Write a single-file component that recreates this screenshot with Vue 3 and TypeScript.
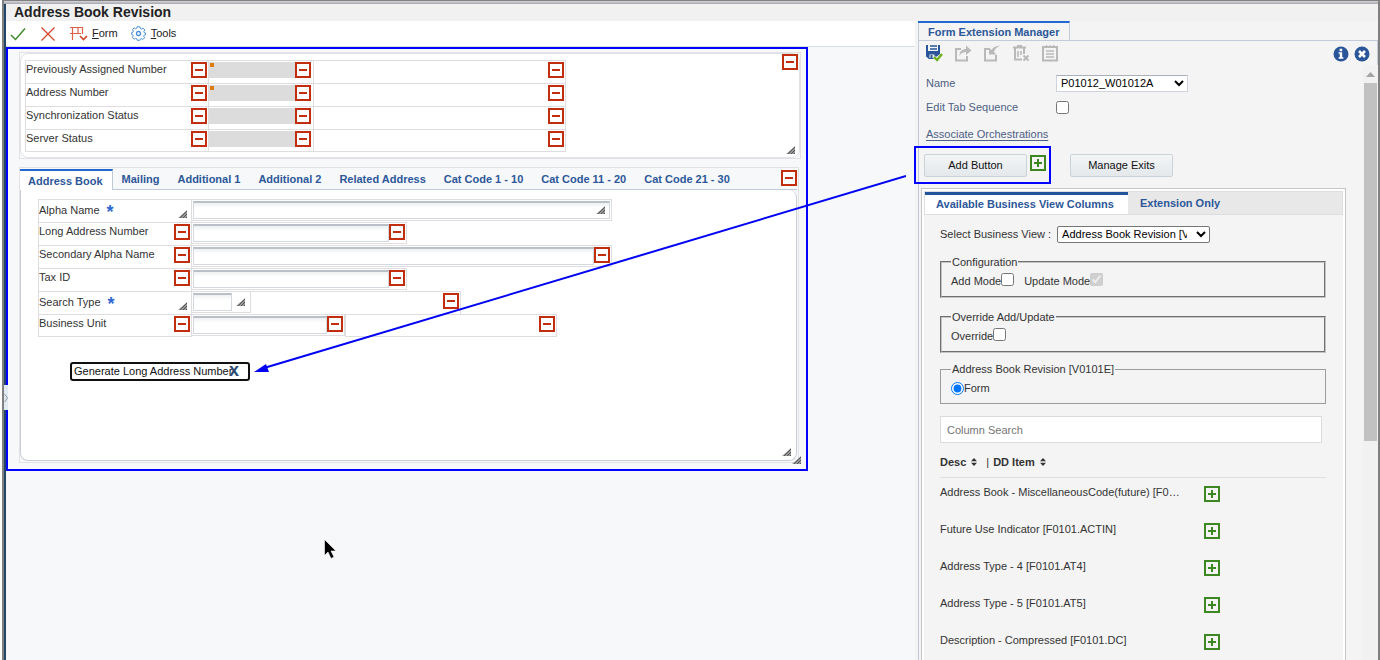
<script setup lang="ts">
import { ref } from 'vue'

interface HeaderField { id: string; label: string; flagged: boolean }
interface DetailField {
  id: string
  label: string
  required?: boolean
  size: 'wide' | 'medium' | 'code' | 'unit'
  removable: boolean
  description?: 'short' | 'long'
}

const headerFields: HeaderField[] = [
  { id: 'previous', label: 'Previously Assigned Number', flagged: true },
  { id: 'number', label: 'Address Number', flagged: true },
  { id: 'sync', label: 'Synchronization Status', flagged: false },
  { id: 'server', label: 'Server Status', flagged: false },
]

const tabs = [
  'Address Book', 'Mailing', 'Additional 1', 'Additional 2',
  'Related Address', 'Cat Code 1 - 10', 'Cat Code 11 - 20', 'Cat Code 21 - 30',
]
const activeTab = ref('Address Book')

const detailFields: DetailField[] = [
  { id: 'alpha', label: 'Alpha Name', required: true, size: 'wide', removable: false },
  { id: 'long', label: 'Long Address Number', size: 'medium', removable: true },
  { id: 'secondary', label: 'Secondary Alpha Name', size: 'wide', removable: true },
  { id: 'tax', label: 'Tax ID', size: 'medium', removable: true },
  { id: 'search', label: 'Search Type', required: true, size: 'code', removable: false, description: 'short' },
  { id: 'unit', label: 'Business Unit', size: 'unit', removable: true, description: 'long' },
]

const columns = [
  'Address Book - MiscellaneousCode(future) [F0…',
  'Future Use Indicator [F0101.ACTIN]',
  'Address Type - 4 [F0101.AT4]',
  'Address Type - 5 [F0101.AT5]',
  'Description - Compressed [F0101.DC]',
]
</script>

<template>
  <div class="window">
    <div class="window-edge"></div>
    <header class="title-bar"><h1>Address Book Revision</h1></header>

    <div class="body">
      <main class="form-side">
        <nav class="toolbar">
          <button class="tool" aria-label="OK">
            <svg width="16" height="14" viewBox="0 0 16 14"><path d="M1 8l4.500 4.500L15 1.500" fill="none" stroke="#3f8a2c" stroke-width="1.500" /></svg>
          </button>
          <button class="tool cancel" aria-label="Cancel">
            <svg width="14" height="14" viewBox="0 0 14 14"><path d="M.5.5l13 13M13.500.5L.5 13.500" fill="none" stroke="#d2452c" stroke-width="1.300" /></svg>
          </button>
          <button class="tool menu form-menu">
            <svg width="18" height="15" viewBox="0 0 18 15">
              <path d="M0 1.500h13M0 7.500h11M2.500 1v13M8 1v7M12.500 1v7" fill="none" stroke="#dc6148" stroke-width="1.200" />
              <path d="M10 10l3.500 3.500L17 10" fill="none" stroke="#d2452c" stroke-width="1.600" />
            </svg>
            <span><u>F</u>orm</span>
          </button>
          <button class="tool menu tools-menu">
            <svg width="15" height="15" viewBox="0 0 15 15" fill="none" stroke="#4a90d9">
              <path d="M6 .8h3l.3 1.700 1.300.6 1.600-.9 1.600 1.800-1 1.500.5 1.200 1.200.2v1.800l-1.300.4-.5 1.200.9 1.500-1.700 1.700-1.500-.9-1.200.5L8.800 14.300H6.200l-.4-1.500-1.200-.5-1.500.9-1.800-1.800.9-1.500-.5-1.200L.6 8.300V6.700l1.300-.4.5-1.300-1-1.500 1.800-1.600 1.400.9 1.200-.6z" />
              <circle cx="7.500" cy="7.500" r="2" stroke-width="1.300" />
            </svg>
            <span><u>T</u>ools</span>
          </button>
        </nav>

        <div class="canvas">
          <section class="group">
            <div class="group-inner">
              <div class="rows">
                <div v-for="f in headerFields" :key="f.id" class="row">
                  <div class="cell head-label">
                    <label :for="f.id">{{ f.label }}</label>
                    <button class="mark minus" :aria-label="'Hide label ' + f.label"></button>
                  </div>
                  <div class="cell head-value">
                    <input :id="f.id" class="readonly" type="text" readonly />
                    <i v-if="f.flagged" class="flag"></i>
                    <button class="mark minus" :aria-label="'Hide ' + f.label"></button>
                  </div>
                  <div class="cell head-desc">
                    <button class="mark minus" :aria-label="'Hide description of ' + f.label"></button>
                  </div>
                </div>
              </div>
              <div class="group-end">
                <button class="mark minus" aria-label="Hide group"></button>
                <svg class="grip" width="9" height="8" viewBox="0 0 9 8"><path d="M0 8L9 0v8z" fill="#999" /><path d="M2 8l7-7M5 8l4-4M8 8l1-1" stroke="#555" /></svg>
              </div>
            </div>
          </section>

          <section class="tab-box">
            <div class="tab-row">
              <button
                v-for="t in tabs" :key="t" class="tab" :class="{ active: t === activeTab }"
                @click="activeTab = t"
              >{{ t }}</button>
              <button class="mark minus tab-hide" aria-label="Hide tabs"></button>
            </div>
            <div class="tab-panel">
              <div class="rows">
                <div v-for="f in detailFields" :key="f.id" class="row" :class="{ required: f.required }">
                  <div class="cell detail-label">
                    <label :for="f.id">{{ f.label }}</label>
                    <span v-if="f.required" class="star">*</span>
                    <svg v-if="f.required" class="grip" width="9" height="8" viewBox="0 0 9 8"><path d="M0 8L9 0v8z" fill="#999" /><path d="M2 8l7-7M5 8l4-4M8 8l1-1" stroke="#555" /></svg>
                    <button v-else class="mark minus" :aria-label="'Hide label ' + f.label"></button>
                  </div>
                  <div class="cell detail-value" :class="f.size">
                    <input :id="f.id" class="field" type="text" />
                    <button v-if="f.removable" class="mark minus" :aria-label="'Hide ' + f.label"></button>
                    <svg v-else class="grip" width="9" height="8" viewBox="0 0 9 8"><path d="M0 8L9 0v8z" fill="#999" /><path d="M2 8l7-7M5 8l4-4M8 8l1-1" stroke="#555" /></svg>
                  </div>
                  <div v-if="f.description" class="cell detail-desc" :class="f.description">
                    <button class="mark minus" :aria-label="'Hide description of ' + f.label"></button>
                  </div>
                </div>
              </div>
              <div class="custom">
                <button class="custom-button">Generate Long Address Number</button>
                <button class="custom-close" aria-label="Remove button">x</button>
              </div>
              <svg class="grip panel-grip" width="9" height="8" viewBox="0 0 9 8"><path d="M0 8L9 0v8z" fill="#999" /><path d="M2 8l7-7M5 8l4-4M8 8l1-1" stroke="#555" /></svg>
            </div>
            <svg class="grip box-grip" width="9" height="8" viewBox="0 0 9 8"><path d="M0 8L9 0v8z" fill="#999" /><path d="M2 8l7-7M5 8l4-4M8 8l1-1" stroke="#555" /></svg>
          </section>
        </div>

        <button class="drawer" aria-label="Open side panel">
          <svg width="4" height="10" viewBox="0 0 4 10"><path d="M.5 1L3.500 5 .5 9" fill="none" stroke="#8b98a5" /></svg>
        </button>
      </main>

      <aside class="manager">
        <div class="manager-head"><h2>Form Extension Manager</h2></div>
        <div class="manager-tools">
          <button class="tool" aria-label="Save">
            <svg width="17" height="17" viewBox="0 0 17 17">
              <path d="M0 0h2v6h10V0h2v9l-4 3-1-1-2 2 1 1H3L0 11.500z" fill="#2a5699" />
              <path d="M4 1h7M4 4h7" stroke="#2a5699" stroke-width="1.300" />
              <path d="M3.500 9.500h5V13h-5z" fill="#f4f4f4" /><path d="M4.500 10h2v3h-2z" fill="#2a5699" />
              <path d="M8 12l3 3 5-6" fill="none" stroke="#6fb01f" stroke-width="2.400" />
            </svg>
          </button>
          <button class="tool" aria-label="Export">
            <svg width="17" height="17" viewBox="0 0 17 17"><path d="M6 4H1v11.500h11V11" fill="none" stroke="#b9b9b9" stroke-width="2" /><path d="M4.500 11c0-5 3-7 6.500-7V.5L16.500 5.500 11 10V7C8 7 6 8 4.500 11z" fill="#b9b9b9" /></svg>
          </button>
          <button class="tool" aria-label="Import">
            <svg width="17" height="17" viewBox="0 0 17 17"><path d="M5 4H1v11.500h11V10" fill="none" stroke="#b9b9b9" stroke-width="2" /><path d="M5 9.500V2.500L7.500 5C9.500 2 12 .8 16.500.5 12.500 2 11 4 9.800 7l2.700 2.500z" fill="#b9b9b9" /></svg>
          </button>
          <button class="tool" aria-label="Delete">
            <svg width="17" height="17" viewBox="0 0 17 17" fill="none" stroke="#b9b9b9"><path d="M0 2.500h13M4 1h5" stroke-width="2" /><path d="M2 3v11.500h7M11 3v6" stroke-width="2" /><path d="M5 6v6M8 6v4" stroke-width="1.600" /><path d="M10.500 10.500l5 5M15.500 10.500l-5 5" stroke-width="2" /></svg>
          </button>
          <button class="tool" aria-label="Notes">
            <svg width="17" height="17" viewBox="0 0 17 17" fill="none" stroke="#b9b9b9"><path d="M1 2h14v13.500H1z" stroke-width="2" /><path d="M4 6h8M4 9h8M4 12h8" stroke-width="1.300" /><path d="M4.500 0v3M8 0v3M11.500 0v3" stroke-width="1.200" /></svg>
          </button>
          <button class="tool info" aria-label="Information">
            <svg width="16" height="16" viewBox="0 0 16 16"><circle cx="8" cy="8" r="7.500" fill="#2a5699" /><path d="M6.600 2.800h2.600v2.400H6.600zM5.600 6.300h3.600v5h1.200v1.500H5.600v-1.500h1.200V7.800H5.600z" fill="#fff" /></svg>
          </button>
          <button class="tool close" aria-label="Close">
            <svg width="16" height="16" viewBox="0 0 16 16"><circle cx="8" cy="8" r="7.500" fill="#2a5699" /><path d="M5 5l6 6M11 5l-6 6" stroke="#fff" stroke-width="2.600" /></svg>
          </button>
        </div>

        <div class="scroller">
          <div class="manager-body">
            <div class="settings">
              <label for="ext-name">Name</label>
              <select id="ext-name" class="name-select"><option>P01012_W01012A</option></select>
              <label for="tab-seq">Edit Tab Sequence</label>
              <input id="tab-seq" type="checkbox" />
            </div>
            <a class="assoc" href="#">Associate Orchestrations</a>
            <div class="actions">
              <div class="add-wrap">
                <button class="push">Add Button</button>
                <button class="mark plus" aria-label="Add"></button>
              </div>
              <button class="push">Manage Exits</button>
            </div>

            <section class="columns-box">
              <div class="sub-tabs">
                <button class="sub-tab on">Available Business View Columns</button>
                <button class="sub-tab">Extension Only</button>
              </div>
              <div class="columns-body">
                <div class="view-row">
                  <label for="view">Select Business View :</label>
                  <select id="view" class="view-select"><option>Address Book Revision [V0101E]</option></select>
                </div>
                <fieldset class="strong">
                  <legend>Configuration</legend>
                  <label class="tick">Add Mode<input type="checkbox" /></label>
                  <label class="tick">Update Mode<input type="checkbox" checked disabled /></label>
                </fieldset>
                <fieldset class="strong">
                  <legend>Override Add/Update</legend>
                  <label class="tick">Override<input type="checkbox" /></label>
                </fieldset>
                <fieldset>
                  <legend>Address Book Revision [V0101E]</legend>
                  <label class="pick"><input type="radio" name="source" checked />Form</label>
                </fieldset>
                <input class="search" type="text" placeholder="Column Search" aria-label="Column Search" />
                <div class="list-head">
                  <button class="sort">Desc
                    <svg width="6" height="8" viewBox="0 0 6 8"><path d="M3 0l3 3.200H0zM3 8l3-3.200H0z" fill="#333" /></svg>
                  </button>
                  <span class="bar">|</span>
                  <button class="sort">DD Item
                    <svg width="6" height="8" viewBox="0 0 6 8"><path d="M3 0l3 3.200H0zM3 8l3-3.200H0z" fill="#333" /></svg>
                  </button>
                </div>
                <ul class="list">
                  <li v-for="c in columns" :key="c">
                    <span>{{ c }}</span>
                    <button class="mark plus" :aria-label="'Add ' + c"></button>
                  </li>
                </ul>
              </div>
            </section>
          </div>
          <div class="track">
            <svg width="9" height="5" viewBox="0 0 9 5"><path d="M4.500 0L9 5H0z" fill="#a3a3a3" /></svg>
            <div class="thumb"></div>
          </div>
        </div>
      </aside>
    </div>

    <svg class="arrow-line" viewBox="0 0 652 196" preserveAspectRatio="none"><path d="M10 193L652 1" stroke="#0000f5" stroke-width="2" /></svg>
    <svg class="arrow-tip" width="16" height="10" viewBox="0 0 16 10"><path d="M0 8L12 0l3 8z" fill="#0000f5" /></svg>
    <svg class="pointer" width="13" height="20" viewBox="0 0 13 20"><path d="M.5.5v16l3.500-3.500 3 6.500 3-1.500-3-6h5z" fill="#000" stroke="#fff" stroke-width=".6" /></svg>
  </div>
</template>

<style>
body { background: #fff; }
</style>

<style scoped>
* { box-sizing: border-box; }
.window {
  position: relative;
  display: flex;
  flex-direction: column;
  height: 100vh;
  margin-left: 2px;
  overflow: hidden;
  border: solid #808080;
  border-width: 1px 2px 0;
  background: #f4f4f4;
  color: #333;
  font: 11px/15px "Liberation Sans", Arial, sans-serif;
}
button, input, select { font: inherit; color: inherit; margin: 0; }
button { padding: 0; border: 0; background: none; white-space: nowrap; }
svg { display: block; flex: none; }
h1, h2 { margin: 0; }

.window-edge { height: 3px; background: linear-gradient(#d6d6dc, #a6a6ae); }
.title-bar { height: 17px; padding-left: 8px; border-left: 2px solid #234567; background: #f1f1f1; }
.title-bar h1 { color: #222; font-size: 14px; line-height: 17px; }
.body { display: flex; flex: 1; min-height: 0; border-left: 2px solid #234567; }

.form-side { position: relative; flex: 1; min-width: 0; margin-right: 3px; background: #f6f8fa; }
.toolbar { display: flex; align-items: center; height: 26px; padding-left: 4px; border-bottom: 1px solid #d9dfe3; background: #fff; }
.cancel { margin-left: 15px; }
.menu { display: flex; gap: 4px; align-items: center; color: #222; }
.form-menu { margin-left: 15px; }
.tools-menu { margin-left: 13px; }
.tools-menu svg { margin-right: 1px; }

.canvas { margin-right: 107px; padding: 3px 5px 6px 11px; border: 2px solid #0000ff; }
.group { border: 1px solid #e3e1e4; background: #f8f9fb; }
.group-inner { display: flex; justify-content: space-between; padding: 6px 1px 5px 4px; border: 1px solid #e0e2e6; border-radius: 8px; background: #fff; }
.group-end { display: flex; flex-direction: column; align-items: center; justify-content: space-between; margin: -6px 0 -2px; }

.row { display: flex; align-items: flex-start; height: 23px; }
.cell { position: relative; display: flex; align-items: flex-start; height: 23px; padding-top: 1px; border: solid #e0dde0; border-width: 1px 1px 0 0; }
.row:last-child .cell { border-bottom-width: 1px; }
.cell label { flex: 1; }
.head-label { width: 184px; padding-right: 1px; border-left-width: 1px; }
.head-value { width: 105px; padding-right: 2px; }
.head-desc { justify-content: flex-end; width: 252px; padding-right: 1px; }
.readonly { flex: 1; min-width: 0; height: 16px; border: 0; background: #dcdcdc; }
.flag { position: absolute; top: 2px; left: 1px; width: 4px; height: 4px; background: #dc7d14; }

.mark { position: relative; flex: none; width: 16px; height: 16px; background: #fff; }
.minus { border: 2px solid #c22e0d; }
.plus { border: 2px solid #3d8722; }
.mark::before, .plus::after { content: ""; position: absolute; inset: 5px 2px; background: #c22e0d; }
.plus::before { background: #3d8722; }
.plus::after { inset: 2px 5px; background: #3d8722; }

.tab-box { position: relative; margin: 8px 2px 0 0; padding: 1px 1px 1px 0; border: 1px solid #e3e1e4; }
.tab-row { display: flex; align-items: center; height: 21px; border-bottom: 1px solid #bfcad6; }
.tab { height: 20px; padding: 0 9px; color: #2c5799; font-weight: bold; }
.tab.active { height: 21px; margin-bottom: -1px; padding: 1px 9px 0 8px; border-top: 2px solid #2368d1; border-right: 1px solid #bfcad6; background: #fff; }
.tab-hide { margin: -3px 0 0 auto; }
.tab-panel { position: relative; min-height: 271px; padding: 9px 17px; border: solid #c9ced6; border-width: 0 1px 1px; border-radius: 0 8px 8px 8px; background: #fff; }
.detail-label { width: 154px; padding-right: 1px; border-left-width: 1px; }
.detail-label label { flex: none; }
.detail-label .mark, .detail-label .grip { margin-left: auto; }
.detail-label .grip { margin-top: 9px; margin-right: 3px; }
.required label { padding-top: 2px; }
.star { margin: 4px 0 0 7px; color: #2f69cf; font-size: 18px; font-weight: bold; }
.detail-value { height: 22px; padding: 1px; border-bottom-width: 1px; }
.wide { width: 420px; }
.medium { width: 215px; }
.code { width: 59px; }
.unit { width: 153px; }
.field { flex: 1; min-width: 0; height: 18px; border: 1px solid #d3d9df; border-top: 2px solid #b9c0c8; background: linear-gradient(#eef0f2, #fff 5px); outline: 0; }
.detail-value .grip { align-self: center; margin: 0 4px; }
.detail-value.wide .grip { margin-left: -14px; margin-right: 5px; }
.detail-desc { justify-content: flex-end; padding-right: 1px; }
.detail-desc.short { width: 210px; }
.detail-desc.long { width: 212px; border-left-width: 1px; }

.custom { position: relative; width: 180px; margin: 25px 0 0 32px; }
.custom-button { display: block; width: 100%; height: 19px; padding-left: 2px; border: 2px solid #111; border-radius: 3px; background: #fff; color: #111; text-align: left; }
.custom-close { position: absolute; top: 1px; right: 11px; color: #2b4c70; font-size: 18px; font-weight: bold; line-height: 15px; }
.panel-grip { position: absolute; right: 5px; bottom: 4px; }
.box-grip { position: absolute; right: -3px; bottom: -2px; }
.drawer { position: absolute; top: 364px; left: -2px; display: flex; align-items: center; width: 4px; height: 25px; background: #e2ebf2; }

.manager { display: flex; flex-direction: column; flex: none; width: 460px; border-left: 1px solid #c3cbdb; }
.manager-head { height: 20px; border-bottom: 1px solid #c3cbdb; }
.manager-head h2 { width: 152px; height: 19px; margin-left: -1px; padding-left: 10px; border-top: 2px solid #2368d1; border-right: 1px solid #c3cbdb; color: #2c5799; font-size: 11px; line-height: 18px; }
.manager-tools { display: flex; gap: 12px; flex: none; height: 24px; padding: 4px 6px 0 7px; border-right: 1px solid #c3cbdb; }
.manager-tools .tool { width: 17px; height: 17px; }
.manager-tools .info { margin-left: auto; }
.manager-tools .close { margin-left: -8px; }

.scroller { display: flex; flex: 1; min-height: 0; }
.manager-body { flex: 1; min-width: 0; padding: 9px 17px 0 2px; }
.settings { display: grid; grid-template-columns: 130px 132px; grid-auto-rows: 18px; row-gap: 6px; align-items: center; margin-left: 5px; color: #4d6085; }
input[type="checkbox"], input[type="radio"] { width: 13px; height: 13px; }
select { color: #000; background: #fff; }
.name-select { height: 17px; border: 1px solid #cfd4dc; border-top-color: #aab0bb; }
.assoc { display: inline-block; margin: 11px 0 0 5px; color: #4d6085; text-decoration: underline; text-underline-offset: 2px; }
.actions { display: flex; gap: 24px; align-items: center; margin: 12px 0 11px 3px; }
.add-wrap { position: relative; display: flex; gap: 3px; }
.add-wrap::before { content: ""; position: absolute; inset: -8px -5px -7px -10px; border: 2px solid #0000ff; pointer-events: none; }
.add-wrap .mark { margin-top: 1px; background: #f4f4f4; }
.push { width: 103px; height: 23px; border: 1px solid #cbd3da; border-radius: 2px; background: linear-gradient(#f3f5f6, #e4e8eb); color: #111; }

.columns-box { padding: 2px; border: 1px solid #c6c6c6; box-shadow: inset 0 0 0 2px #fff; }
.sub-tabs { display: flex; height: 24px; border: 1px solid #dedede; background: #e8e8e8; }
.sub-tab { padding: 0 12px; color: #2c5799; font-weight: bold; }
.sub-tab.on { width: 203px; padding: 0 11px; border-top: 3px solid #23539b; background: #fff; text-align: left; }
.columns-body { padding: 10px 17px 0 16px; }
.view-row { display: flex; gap: 6px; align-items: center; height: 18px; }
.view-select { width: 153px; height: 17px; padding-right: 6px; border: 1px solid #767676; border-radius: 2px; }
fieldset { display: flex; gap: 10px; align-items: center; height: 42px; margin: 9px 0 0; padding: 0 10px 3px; border: 1px solid #9c9c9c; }
fieldset.strong { height: 43px; margin-top: 12px; border: 2px groove #c4c4c4; padding: 0 9px 2px; }
legend { padding: 0 1px; line-height: 14px; }
.tick { display: flex; align-items: center; }
.tick input { margin-bottom: 5px; }
.pick { display: flex; align-items: center; }
.search { display: block; width: calc(100% - 4px); height: 27px; margin-top: 12px; padding: 0 6px; border: 1px solid #dcdcdc; background: #fff; }
.search::placeholder { color: #757575; }
.list-head { display: flex; align-items: center; height: 35px; padding-top: 4px; border-bottom: 1px solid #dfdfdf; }
.sort { display: flex; gap: 5px; align-items: center; font-weight: bold; }
.bar { margin: 0 4px 0 9px; }
.list { margin: 0; padding: 0; list-style: none; }
.list li { display: flex; height: 37px; padding-top: 8px; line-height: 12px; }
.list li span { width: 264px; white-space: nowrap; }
.list .mark { background: #f4f4f4; }
.track { flex: none; width: 15px; padding: 7px 1px 0; background: #f1f1f1; }
.track svg { margin: 0 auto; }
.thumb { height: 358px; margin-top: 6px; background: #c1c1c1; }

.arrow-line { position: absolute; top: 174px; left: 250px; width: calc(100% - 722px); height: 196px; pointer-events: none; }
.arrow-tip { position: absolute; top: 363px; left: 250px; }
.pointer { position: absolute; top: 538px; left: 320px; }
</style>
